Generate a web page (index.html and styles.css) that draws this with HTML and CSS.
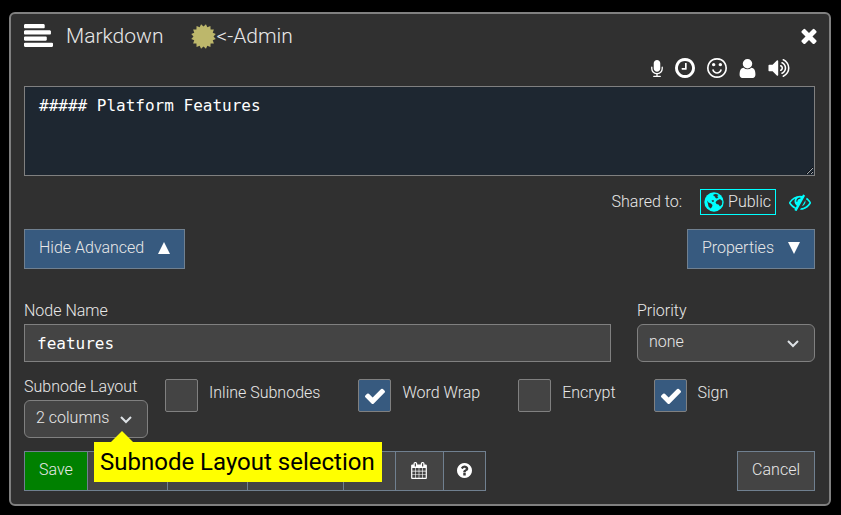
FILE: index.html
```html
<!DOCTYPE html>
<html lang="en">
<head>
<meta charset="utf-8">
<meta name="viewport" content="width=device-width, initial-scale=1">
<title>Markdown</title>
<link rel="stylesheet" href="styles.css">
</head>
<body>
<main class="dialog">
  <header class="titlebar">
    <svg class="icon-type" viewBox="0 128 1792 1408" aria-hidden="true"><path d="M1792 1344v128q0 26-19 45t-45 19h-1664q-26 0-45-19t-19-45v-128q0-26 19-45t45-19h1664q26 0 45 19t19 45zm-384-384v128q0 26-19 45t-45 19h-1280q-26 0-45-19t-19-45v-128q0-26 19-45t45-19h1280q26 0 45 19t19 45zm256-384v128q0 26-19 45t-45 19h-1536q-26 0-45-19t-19-45v-128q0-26 19-45t45-19h1536q26 0 45 19t19 45zm-384-384v128q0 26-19 45t-45 19h-1152q-26 0-45-19t-19-45v-128q0-26 19-45t45-19h1152q26 0 45 19t19 45z"/></svg>
    <h1 class="title">Markdown</h1>
    <svg class="icon-cert" viewBox="0 0 25 25" aria-hidden="true"><path d="M12.500 2.500L14.940 0.240L16.330 3.260L19.440 2.110L19.570 5.430L22.890 5.560L21.740 8.670L24.760 10.060L22.500 12.500L24.760 14.940L21.740 16.330L22.890 19.440L19.570 19.570L19.440 22.890L16.330 21.740L14.940 24.760L12.500 22.500L10.060 24.760L8.670 21.740L5.560 22.890L5.430 19.570L2.110 19.440L3.260 16.330L0.240 14.940L2.500 12.500L0.240 10.060L3.260 8.670L2.110 5.560L5.430 5.430L5.560 2.110L8.670 3.260L10.060 0.240Z"/></svg>
    <span class="owner">&lt;-Admin</span>
    <button class="close" type="button" aria-label="Close"><svg class="icon-close" viewBox="302 302 1188 1252"><path d="M1490 1322q0 40-28 68l-136 136q-28 28-68 28t-68-28l-294-294-294 294q-28 28-68 28t-68-28l-136-136q-28-28-28-68t28-68l294-294-294-294q-28-28-28-68t28-68l136-136q28-28 68-28t68 28l294 294 294-294q28-28 68-28t68 28l136 136q28 28 28 68t-28 68l-294 294 294 294q28 28 28 68z"/></svg></button>
  </header>

  <div class="tools">
    <button type="button" aria-label="Dictate"><svg class="icon-mic" viewBox="320 0 1152 1664"><path d="M1472 704v128q0 221-147.500 384.500t-364.500 187.500v132h256q26 0 45 19t19 45-19 45-45 19h-640q-26 0-45-19t-19-45 19-45 45-19h256v-132q-217-24-364.500-187.500t-147.500-384.500v-128q0-26 19-45t45-19 45 19 19 45v128q0 185 131.500 316.500t316.500 131.500 316.500-131.500 131.500-316.500v-128q0-26 19-45t45-19 45 19 19 45zm-256-384v512q0 132-94 226t-226 94-226-94-94-226v-512q0-132 94-226t226-94 226 94 94 226z"/></svg></button>
    <button type="button" aria-label="Insert time"><svg class="icon-round" viewBox="128 128 1536 1536"><path d="M1024 544v448q0 14-9 23t-23 9h-320q-14 0-23-9t-9-23v-64q0-14 9-23t23-9h224v-352q0-14 9-23t23-9h64q14 0 23 9t9 23zm416 352q0-148-73-273t-198-198-273-73-273 73-198 198-73 273 73 273 198 198 273 73 273-73 198-198 73-273zm224 0q0 209-103 385.500t-279.500 279.500-385.500 103-385.500-103-279.500-279.500-103-385.500 103-385.500 279.500-279.500 385.500-103 385.500 103 279.500 279.500 103 385.500z"/></svg></button>
    <button type="button" aria-label="Insert emoji"><svg class="icon-round" viewBox="128 128 1536 1536"><path d="M1262 1075q-37 121-138 195t-228 74-228-74-138-195q-8-25 4-48.500t38-31.500q25-8 48.500 4t31.500 38q25 80 92.500 129.500t151.500 49.500 151.500-49.500 92.500-129.500q8-26 32-38t49-4 37 31.500 4 48.500zm-494-435q0 53-37.500 90.500t-90.500 37.500-90.500-37.500-37.500-90.500 37.500-90.500 90.500-37.500 90.500 37.500 37.500 90.500zm512 0q0 53-37.500 90.500t-90.500 37.500-90.500-37.500-37.500-90.500 37.500-90.500 90.500-37.500 90.500 37.500 37.500 90.500zm256 256q0-130-51-248.500t-136.500-204-204-136.500-248.500-51-248.500 51-204 136.500-136.500 204-51 248.500 51 248.500 136.500 204 204 136.500 248.500 51 248.500-51 204-136.500 136.500-204 51-248.500zm128 0q0 209-103 385.500t-279.500 279.500-385.500 103-385.500-103-279.500-279.500-103-385.500 103-385.500 279.500-279.500 385.500-103 385.500 103 279.500 279.500 103 385.500z"/></svg></button>
    <button type="button" aria-label="Insert user"><svg class="icon-user" viewBox="256 128 1280 1536"><path d="M1536 1399q0 109-62.500 187t-150.500 78h-854q-88 0-150.500-78t-62.500-187q0-85 8.500-160.500t31.500-152 58.500-131 94-89 134.500-34.500q131 128 313 128t313-128q76 0 134.500 34.500t94 89 58.500 131 31.500 152 8.500 160.500zm-256-887q0 159-112.500 271.500t-271.500 112.500-271.500-112.500-112.500-271.500 112.500-271.500 271.500-112.500 271.500 112.500 112.500 271.500z"/></svg></button>
    <button type="button" aria-label="Read aloud"><svg class="icon-volume" viewBox="64 184 1664 1424"><path d="M832 352v1088q0 26-19 45t-45 19-45-19l-333-333h-262q-26 0-45-19t-19-45v-384q0-26 19-45t45-19h262l333-333q19-19 45-19t45 19 19 45zm384 544q0 76-42.500 141.500t-112.500 93.500q-10 5-25 5-26 0-45-18.500t-19-45.500q0-21 12-35.500t29-25 34-23 29-36 12-56.500-12-56.500-29-36-34-23-29-25-12-35.500q0-27 19-45.500t45-18.500q15 0 25 5 70 27 112.500 93t42.500 142zm256 0q0 153-85 282.500t-225 188.500q-13 5-25 5-27 0-46-19t-19-45q0-39 39-59 56-29 76-44 74-54 115.500-135.500t41.500-173.500-41.500-173.500-115.500-135.500q-20-15-76-44-39-20-39-59 0-26 19-45t45-19q13 0 26 5 140 59 225 188.500t85 282.500zm256 0q0 230-127 422.500t-338 283.500q-13 5-26 5-26 0-45-19t-19-45q0-36 39-59 7-4 22.500-10.500t22.500-10.500q46-25 82-51 123-91 192-227t69-289-69-289-192-227q-36-26-82-51-7-4-22.500-10.500t-22.500-10.500q-39-23-39-59 0-26 19-45t45-19q13 0 26 5 211 91 338 283.500t127 422.500z"/></svg></button>
  </div>

  <textarea class="content" aria-label="Content" spellcheck="false">##### Platform Features</textarea>

  <div class="sharing">
    <span class="shared-label">Shared to:</span>
    <button class="public" type="button">
      <svg class="icon-globe" viewBox="0 0 20 20" aria-hidden="true"><circle cx="10" cy="10" r="9.700"/><path class="land-gap" d="M9.500 2.500L12 2L14.500 3L13 4.200L14.500 5L13 6.500L11.500 6L11 4.500L9.500 4ZM13 8.500L16 7L18.300 9L18 12.500L16 14.500L14.500 12.500L12.500 12L11.500 10.200ZM3 8.500L4.500 10.500L7 11.500L8.500 13L8 15L6.500 16.500L4.500 14.500L4 12ZM7.500 8.500L9.500 8L10 9.500L8.500 10Z"/></svg>
      <span>Public</span>
    </button>
    <button class="unlisted" type="button" aria-label="Unlisted"><svg class="icon-eye" viewBox="0 192 1792 1408"><path d="M555 1335l78-141q-87-63-136-159t-49-203q0-121 61-225-229 117-381 353 167 258 427 375zm389-759q0-20-14-34t-34-14q-125 0-214.500 89.500t-89.500 214.500q0 20 14 34t34 14 34-14 14-34q0-86 61-147t147-61q20 0 34-14t14-34zm363-191q0 7-1 9-106 189-316 567t-315 566l-49 89q-10 16-28 16-12 0-134-70-16-10-16-28 0-12 44-87-143-65-263.500-173t-208.500-245q-20-31-20-69t20-69q153-235 380-371t496-136q89 0 180 17l54-97q10-16 28-16 5 0 18 6t31 15.500 33 18.500 31.500 18.500 19.500 11.500q16 10 16 27zm37 447q0 139-79 253.500t-209 164.500l280-502q8 45 8 84zm448 128q0 35-20 69-39 64-109 145-150 172-347.500 267t-419.500 95l74-132q212-18 392.500-137t301.500-307q-115-179-282-294l63-112q95 64 182.500 153t144.500 184q20 34 20 69z"/></svg></button>
  </div>

  <div class="split">
    <button class="btn primary" type="button">Hide Advanced <svg class="triangle" viewBox="0 0 12 12" aria-hidden="true"><path d="M6 0L12 12H0Z"/></svg></button>
    <button class="btn primary" type="button">Properties <svg class="triangle" viewBox="0 0 12 12" aria-hidden="true"><path d="M0 0H12L6 12Z"/></svg></button>
  </div>

  <div class="fields">
    <div class="field name">
      <label for="node-name">Node Name</label>
      <input class="text" id="node-name" type="text" value="features">
    </div>
    <div class="field priority">
      <label for="priority">Priority</label>
      <span class="select"><select id="priority"><option>none</option></select><svg class="chevron" viewBox="0 0 12 8" aria-hidden="true"><path d="M1 1L6 6L11 1"/></svg></span>
    </div>
  </div>

  <div class="options">
    <div class="field layout">
      <label for="layout">Subnode Layout</label>
      <span class="select"><select id="layout"><option>2 columns</option></select><svg class="chevron" viewBox="0 0 12 8" aria-hidden="true"><path d="M1 1L6 6L11 1"/></svg>
        <span class="tip" role="tooltip">Subnode Layout selection</span>
      </span>
    </div>
    <label class="check"><span class="box"><input type="checkbox"></span>Inline Subnodes</label>
    <label class="check"><span class="box"><input type="checkbox" checked><svg viewBox="121 304 1550 1188" aria-hidden="true"><path d="M1671 566q0 40-28 68l-724 724-136 136q-28 28-68 28t-68-28l-136-136-362-362q-28-28-28-68t28-68l136-136q28-28 68-28t68 28l294 295 656-657q28-28 68-28t68 28l136 136q28 28 28 68z"/></svg></span>Word Wrap</label>
    <label class="check"><span class="box"><input type="checkbox"></span>Encrypt</label>
    <label class="check"><span class="box"><input type="checkbox" checked><svg viewBox="121 304 1550 1188" aria-hidden="true"><path d="M1671 566q0 40-28 68l-724 724-136 136q-28 28-68 28t-68-28l-136-136-362-362q-28-28-28-68t28-68l136-136q28-28 68-28t68 28l294 295 656-657q28-28 68-28t68 28l136 136q28 28 28 68z"/></svg></span>Sign</label>
  </div>

  <footer class="split actions">
    <div class="group">
      <button class="btn save" type="button">Save</button>
      <button class="btn wide" type="button"></button>
      <button class="btn wide" type="button"></button>
      <button class="btn wider" type="button"></button>
      <button class="btn slot" type="button"></button>
      <button class="btn calendar" type="button" aria-label="Calendar"><svg class="icon-cal" viewBox="64 0 1664 1792"><path d="M192 1664h288v-288h-288v288zm352 0h320v-288h-320v288zm-352-352h288v-320h-288v320zm352 0h320v-320h-320v320zm-352-384h288v-288h-288v288zm736 736h320v-288h-320v288zm-384-736h320v-288h-320v288zm768 736h288v-288h-288v288zm-384-352h320v-320h-320v320zm-352-864v-288q0-13-9.500-22.500t-22.500-9.500h-64q-13 0-22.500 9.500t-9.500 22.500v288q0 13 9.500 22.500t22.500 9.500h64q13 0 22.500-9.500t9.500-22.500zm736 864h288v-320h-288v320zm-384-384h320v-288h-320v288zm384 0h288v-288h-288v288zm32-480v-288q0-13-9.500-22.500t-22.500-9.500h-64q-13 0-22.500 9.500t-9.500 22.500v288q0 13 9.500 22.500t22.500 9.500h64q13 0 22.500-9.500t9.500-22.500zm384-64v1280q0 52-38 90t-90 38h-1408q-52 0-90-38t-38-90v-1280q0-52 38-90t90-38h128v-96q0-66 47-113t113-47h64q66 0 113 47t47 113v96h384v-96q0-66 47-113t113-47h64q66 0 113 47t47 113v96h128q52 0 90 38t38 90z"/></svg></button>
      <button class="btn help" type="button" aria-label="Help"><svg class="icon-help" viewBox="128 128 1536 1536"><path d="M1024 1376v-192q0-14-9-23t-23-9h-192q-14 0-23 9t-9 23v192q0 14 9 23t23 9h192q14 0 23-9t9-23zm256-672q0-88-55.500-163t-138.500-116-170-41q-243 0-371 213-15 24 8 42l132 100q7 6 19 6 16 0 25-12 53-68 86-92 34-24 86-24 48 0 85.500 26t37.500 59q0 38-20 61t-68 45q-63 28-115.500 86.500t-52.500 125.500v36q0 14 9 23t23 9h192q14 0 23-9t9-23q0-19 21.500-49.500t54.500-49.500q32-18 49-28.500t46-35 44.500-48 28-60.500 12.500-81zm384 192q0 209-103 385.500t-279.500 279.500-385.500 103-385.500-103-279.500-279.500-103-385.500 103-385.500 279.500-279.500 385.500-103 385.500 103 279.500 279.500 103 385.500z"/></svg></button>
    </div>
    <button class="btn" type="button">Cancel</button>
  </footer>
</main>
</body>
</html>
```
FILE: styles.css
```css
* { box-sizing: border-box; }

body {
  margin: 0;
  padding: 12px 10px 8px 9px;
  background: #000;
  color: #e8e8e8;
  font: 300 16px/24px Roboto, sans-serif;
}

button, input, select, textarea { font: inherit; color: inherit; margin: 0; }
button { padding: 0; border: 0; background: none; cursor: pointer; }
svg { display: block; flex: none; fill: #fff; }

.dialog {
  display: flex;
  flex-direction: column;
  padding: 6px 14px 13px 13px;
  border: 2px solid #808080;
  border-radius: 6px;
  background: #303030;
}

/* Title bar */
.titlebar { display: flex; align-items: center; height: 32px; }
.title, .owner { margin: 0; font-size: 21px; font-weight: 300; line-height: 32px; }
.title { margin: 0 28px 0 13px; }
.icon-type { width: 29px; height: 23px; margin-bottom: 2px; }
.icon-cert { width: 25px; height: 25px; fill: #bdb76b; }
.close { margin-left: auto; margin-right: -2px; }
.icon-close { width: 16px; height: 16px; }

.tools {
  display: flex;
  justify-content: flex-end;
  align-items: center;
  gap: 12px;
  height: 32px;
  margin-bottom: 2px;
  padding-right: 25px;
}
.icon-mic { width: 12px; height: 17px; }
.icon-round { width: 20px; height: 20px; }
.icon-user { width: 17px; height: 19px; }
.icon-volume { width: 22px; height: 18px; }

.content {
  display: block;
  width: 100%;
  height: 90px;
  padding: 7px 14px;
  border: 1px solid #808080;
  background: #1e2731;
  color: #fff;
  font: 16px/24px "DejaVu Sans Mono", monospace;
  resize: vertical;
}

/* Sharing */
.sharing { display: flex; justify-content: flex-end; align-items: center; margin-top: 13px; padding-right: 4px; }
.public {
  display: flex;
  align-items: center;
  gap: 4px;
  margin: 0 13px 0 18px;
  padding: 0 4px 0 3px;
  border: 1px solid #0ff;
}
.icon-globe { width: 20px; height: 20px; fill: #0ff; }
.land-gap { fill: #303030; }
.icon-eye { width: 22px; height: 18px; fill: #0ff; }

/* Buttons */
.split { display: flex; justify-content: space-between; margin-top: 14px; }
.btn {
  display: flex;
  align-items: center;
  justify-content: center;
  height: 40px;
  padding: 0 14px 2px;
  border: 1px solid #708090;
  background: #444;
}
.primary { gap: 14px; background: #375a7f; }
.triangle { width: 12px; height: 12px; }
.actions { margin-top: 13px; }
.group { display: flex; }
.group .btn + .btn { margin-left: -1px; }
.save { background: #008000; }
.wide { width: 81px; }
.wider { width: 97px; }
.slot { width: 53px; }
.calendar { width: 49px; }
.help { width: 43px; padding: 0 0 2px; background: #3a3a3a; }
.icon-cal { width: 16px; height: 17px; }
.icon-help { width: 15px; height: 15px; }

/* Fields */
.field { display: flex; flex-direction: column; gap: 1px; }
.fields { display: flex; gap: 26px; margin-top: 30px; }
.name { flex: 1; }
.priority { flex: 0 0 178px; }
.text {
  width: 100%;
  height: 38px;
  padding: 0 12px;
  border: 1px solid #808080;
  background: #444;
  color: #fff;
  font: 16px/24px "DejaVu Sans Mono", monospace;
}
.select { position: relative; display: block; }
.select select {
  display: block;
  width: 100%;
  height: 38px;
  padding: 0 12px 2px 11px;
  border: 1px solid #808080;
  border-radius: 6px;
  background: #444;
  appearance: none;
}
.chevron {
  position: absolute;
  top: 16px;
  right: 16px;
  width: 12px;
  height: 8px;
  fill: none;
  stroke: #dee2e6;
  stroke-width: 2;
  pointer-events: none;
}

.options { display: flex; align-items: flex-start; margin-top: 13px; }
.layout { width: 124px; margin-right: 17px; }
.layout label { white-space: nowrap; }
.check { display: flex; gap: 11px; margin: 4px 38px 0 0; line-height: 28px; }
.box { position: relative; width: 33px; height: 33px; }
.box input {
  display: block;
  width: 33px;
  height: 33px;
  border: 1px solid #808080;
  border-radius: 2px;
  background: #444;
  appearance: none;
}
.box input:checked { background: #375a7f; }
.box svg { position: absolute; top: 9px; left: 7px; width: 20px; height: 16px; }

/* Tooltip */
.tip {
  position: absolute;
  z-index: 1;
  top: 42px;
  left: 70px;
  padding: 0 7px 0 6px;
  background: #ff0;
  color: #000;
  font-size: 24px;
  font-weight: 400;
  line-height: 40px;
  white-space: nowrap;
}
.tip::before {
  content: "";
  position: absolute;
  bottom: 100%;
  left: 17px;
  border: 11px solid transparent;
  border-top: 0;
  border-bottom-color: #ff0;
}
```
